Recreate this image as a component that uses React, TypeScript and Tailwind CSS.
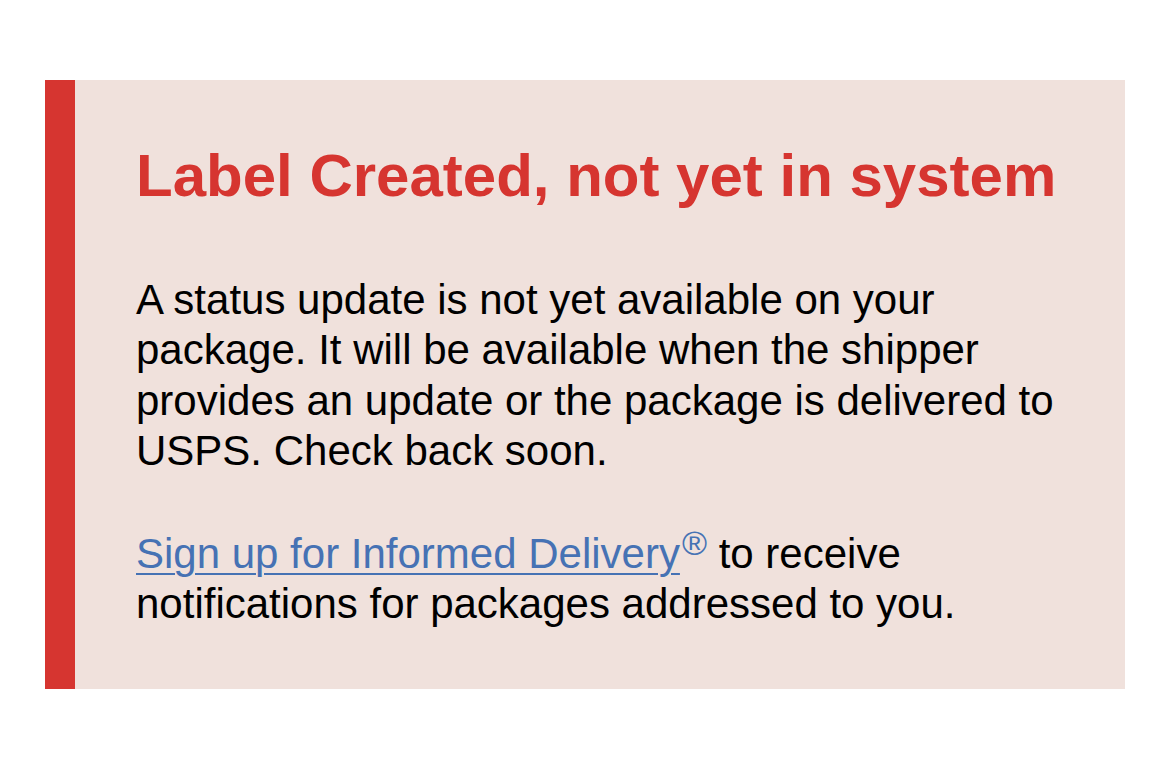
export default function App() {
  return (
    <div
      className="min-h-[763px] w-full bg-white pt-[80px] px-[45px]"
      style={{ fontFamily: '"Liberation Sans", Arial, Helvetica, sans-serif' }}
    >
      <div className="flex bg-[#f0e1dc]">
        <div className="w-[30px] shrink-0 bg-[#d63530]" />
        <div className="flex-1 pl-[61px] pr-[60px] pt-[60px] pb-[60px]">
          <h2 className="text-[60px] leading-[72px] font-bold text-[#d63530] mb-[63px]">
            Label Created, not yet in system
          </h2>
          <p className="text-[42px] leading-[50.4px] text-black mb-[52px]">
            A status update is not yet available on your package. It will be available when the
            shipper provides an update or the package is delivered to USPS. Check back soon.
          </p>
          <p className="text-[42px] leading-[50.4px] text-black">
            <a href="#" className="text-[#4672b4] underline decoration-[2px] underline-offset-[5px]">
              Sign up for Informed Delivery
            </a>
            <span className="relative -top-[13px] text-[#4672b4] text-[34px] leading-none ml-[2px]">®</span>{" "}
            to receive notifications for packages addressed to you.
          </p>
        </div>
      </div>
    </div>
  );
}
